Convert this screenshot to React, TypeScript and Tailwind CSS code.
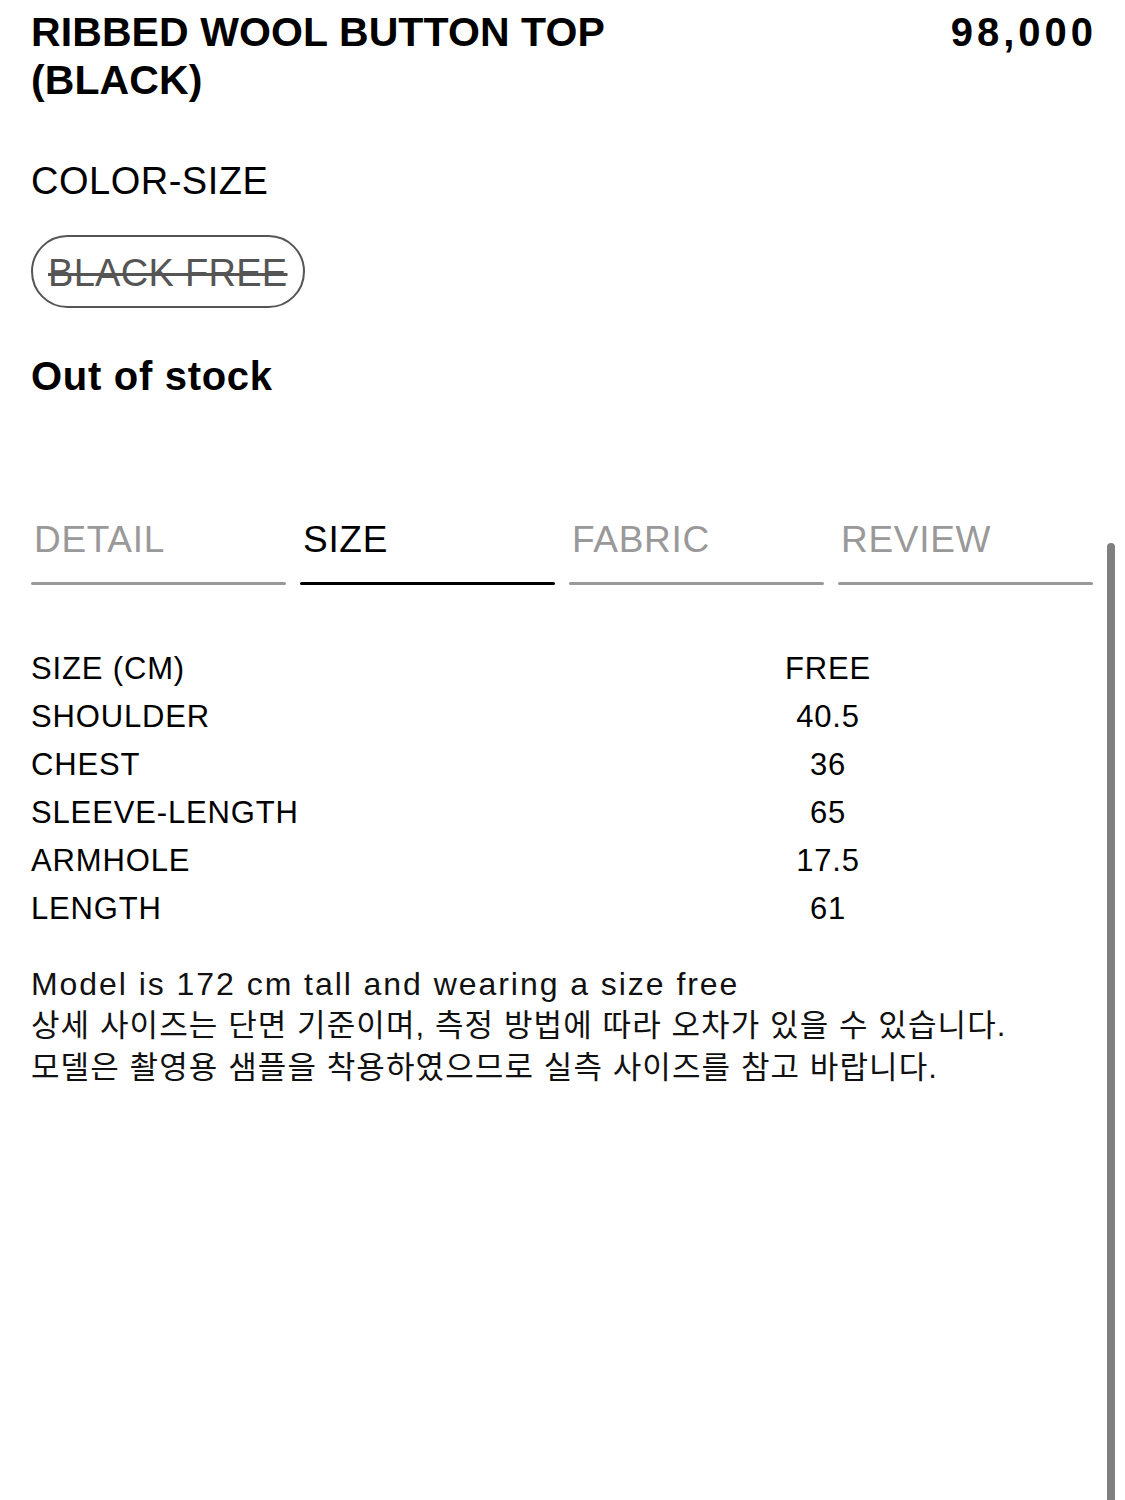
import React from "react";

const rows: [string, string][] = [
  ["SIZE (CM)", "FREE"],
  ["SHOULDER", "40.5"],
  ["CHEST", "36"],
  ["SLEEVE-LENGTH", "65"],
  ["ARMHOLE", "17.5"],
  ["LENGTH", "61"],
];

const tabs = ["DETAIL", "SIZE", "FABRIC", "REVIEW"];

export default function App() {
  return (
    <div
      className="relative w-[1125px] h-[1500px] bg-white text-black overflow-hidden"
      style={{ fontFamily: '"Liberation Sans", "Noto Sans CJK KR", sans-serif' }}
    >
      <div className="pl-[31px] pr-[32px] pt-[8px]">
        <div className="flex justify-between items-start">
          <h1 className="text-[41px] leading-[48px] font-bold tracking-[0.1px]">
            RIBBED WOOL BUTTON TOP
            <br />
            (BLACK)
          </h1>
          <div className="text-[40px] leading-[48px] font-bold tracking-[4px] mr-[-4px]">98,000</div>
        </div>

        <div className="mt-[55px] text-[38px] leading-[44px] tracking-[0.5px]">COLOR-SIZE</div>

        <div className="mt-[32px] flex">
          <div className="w-[274px] h-[73px] rounded-full border-2 border-[#555] flex items-center px-[15px] pt-[3px]">
            <span className="whitespace-nowrap text-[38px] tracking-[0.3px] text-[#555] line-through decoration-[3px]">BLACK FREE</span>
          </div>
        </div>

        <div className="mt-[45px] text-[40px] leading-[46px] font-bold tracking-[0.7px]">Out of stock</div>

        <div className="mt-[119px] grid grid-cols-4 gap-[14px]">
          {tabs.map((t) => {
            const active = t === "SIZE";
            return (
              <div key={t} className="flex flex-col">
                <div
                  className={
                    "pl-[3px] text-[37px] leading-[44px] tracking-[0.7px] " +
                    (active ? "text-black" : "text-[#999]")
                  }
                >
                  {t}
                </div>
                <div
                  className={
                    "mt-[20px] h-[3px] rounded-full " + (active ? "bg-black" : "bg-[#999]")
                  }
                />
              </div>
            );
          })}
        </div>

        <div className="mt-[60px] flex flex-col">
          {rows.map(([k, v]) => (
            <div key={k} className="flex text-[31px] leading-[48px] tracking-[0.85px]">
              <div className="w-[710px]">{k}</div>
              <div className="w-[174px] text-center">{v}</div>
            </div>
          ))}
        </div>

        <div className="mt-[30px] text-[#111]">
          <div className="text-[32px] leading-[42px] tracking-[1.95px]">Model is 172 cm tall and wearing a size free</div>
          <div className="text-[31px] leading-[42px] tracking-[1.1px]">상세 사이즈는 단면 기준이며, 측정 방법에 따라 오차가 있을 수 있습니다.</div>
          <div className="text-[31px] leading-[42px] tracking-[1.1px]">모델은 촬영용 샘플을 착용하였으므로 실측 사이즈를 참고 바랍니다.</div>
        </div>
      </div>

      <div className="absolute left-[1107px] top-[543px] w-[8px] h-[960px] rounded-t-full bg-[#808080]" />
    </div>
  );
}
